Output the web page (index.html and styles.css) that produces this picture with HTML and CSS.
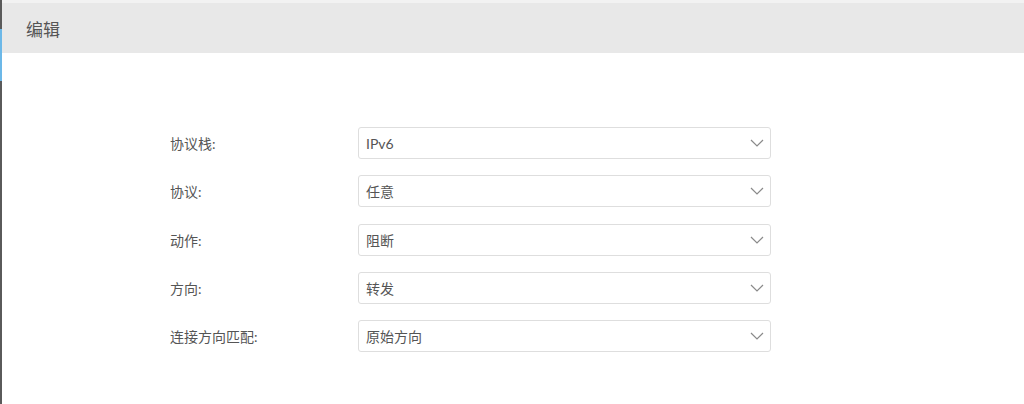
FILE: index.html
```html
<!DOCTYPE html>
<html lang="zh">
<head>
<meta charset="utf-8">
<title>编辑</title>
<link rel="stylesheet" href="styles.css">
</head>
<body>
<div class="page">
  <div class="edge"><span class="edge-active"></span></div>
  <div class="main">
    <div class="header"><span class="title">编辑</span></div>
    <form class="form">
      <div class="row">
        <label class="label">协议栈:</label>
        <div class="select"><span class="value">IPv6</span><svg class="chev" viewBox="0 0 14 8" width="14" height="8"><path d="M1 1 L7 7 L13 1" fill="none" stroke="#8a8a8a" stroke-width="1.2"/></svg></div>
      </div>
      <div class="row">
        <label class="label">协议:</label>
        <div class="select"><span class="value">任意</span><svg class="chev" viewBox="0 0 14 8" width="14" height="8"><path d="M1 1 L7 7 L13 1" fill="none" stroke="#8a8a8a" stroke-width="1.2"/></svg></div>
      </div>
      <div class="row">
        <label class="label">动作:</label>
        <div class="select"><span class="value">阻断</span><svg class="chev" viewBox="0 0 14 8" width="14" height="8"><path d="M1 1 L7 7 L13 1" fill="none" stroke="#8a8a8a" stroke-width="1.2"/></svg></div>
      </div>
      <div class="row">
        <label class="label">方向:</label>
        <div class="select"><span class="value">转发</span><svg class="chev" viewBox="0 0 14 8" width="14" height="8"><path d="M1 1 L7 7 L13 1" fill="none" stroke="#8a8a8a" stroke-width="1.2"/></svg></div>
      </div>
      <div class="row">
        <label class="label">连接方向匹配:</label>
        <div class="select"><span class="value">原始方向</span><svg class="chev" viewBox="0 0 14 8" width="14" height="8"><path d="M1 1 L7 7 L13 1" fill="none" stroke="#8a8a8a" stroke-width="1.2"/></svg></div>
      </div>
    </form>
  </div>
</div>
</body>
</html>
```
FILE: styles.css
```css
html, body {
  margin: 0;
  padding: 0;
  background: #ffffff;
  font-family: "Lato", "Noto Sans CJK SC", sans-serif;
  color: #555555;
}
.page {
  display: flex;
  height: 404px;
  overflow: hidden;
}
.edge {
  width: 2px;
  flex: none;
  background: #5a5a5a;
  display: flex;
  flex-direction: column;
  padding-top: 29px;
  box-sizing: border-box;
}
.edge-active {
  display: block;
  height: 52px;
  background: #6cb8e8;
}
.main {
  flex: 1;
  padding-top: 3px;
  background: linear-gradient(#f2f2f2 0, #f2f2f2 3px, #ffffff 3px);
}
.header {
  height: 50px;
  background: #e8e8e8;
  display: flex;
  align-items: center;
  padding-left: 24px;
}
.title {
  font-size: 17px;
  color: #555555;
}
.form {
  padding-top: 74px;
  padding-left: 168px;
  display: flex;
  flex-direction: column;
  gap: 16.3px;
}
.row {
  display: flex;
  align-items: center;
  height: 32px;
}
.label {
  width: 188px;
  font-size: 14px;
  color: #555555;
}
.select {
  width: 413px;
  height: 32px;
  box-sizing: border-box;
  border: 1px solid #dedede;
  border-radius: 3px;
  display: flex;
  align-items: center;
  justify-content: space-between;
  padding: 0 6px 0 7px;
}
.value {
  font-size: 14px;
  color: #555555;
}
.chev {
  display: block;
}
```
